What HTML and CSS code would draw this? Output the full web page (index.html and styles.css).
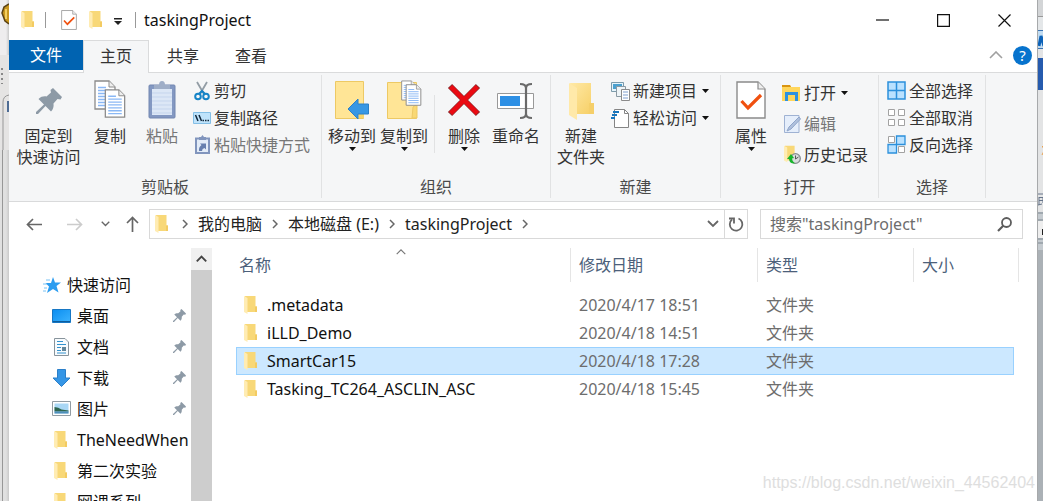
FILE: index.html
```html
<!DOCTYPE html>
<html lang="zh-CN">
<head>
<meta charset="utf-8">
<title>taskingProject</title>
<link rel="stylesheet" href="styles.css">
</head>
<body>
<svg class="defs" aria-hidden="true">
  <defs>
    <linearGradient id="gold" x1="0" x2="1" y1="0" y2="1"><stop offset="0" stop-color="#ffe9a6"/><stop offset="1" stop-color="#f6ce63"/></linearGradient>
    <linearGradient id="sky" x1="0" x2="1" y1="0" y2="1"><stop offset="0" stop-color="#0a8df0"/><stop offset="1" stop-color="#3db4ff"/></linearGradient>
  </defs>
  <symbol id="folder" viewBox="0 0 13 18">
    <path d="M1 0h10.500v10.500H13V16H3z" fill="#f8d878"/>
    <path d="M11 10.500h2V16h-2z" fill="#f3cb62"/>
    <path d="M0 0l3.500 2V18L0 16z" fill="#ffecb3"/>
  </symbol>
  <symbol id="pin" viewBox="0 0 26 26">
    <path d="M17 0l9 9-1.500 2.500-3-.5-4 4.500c.5 3.500-.5 6-2.500 8L9.500 18 2 26H0v-2l8-7.500L2.500 11C5 8.500 8 8 10.500 8.500L15 4.500 14.500 2z" fill="#8d9aa6"/>
  </symbol>
  <symbol id="page" viewBox="0 0 22 30">
    <path d="M1 1h14l6 6v22H1z" fill="#fff" stroke="#8b8b8b" stroke-width="1.300"/>
    <path d="M15 1v6h6" fill="#eee" stroke="#8b8b8b"/>
    <path d="M4 7.500h8M4 10.500h14M4 13.500h14M4 16.500h14M4 19.500h14M4 22.500h14M4 25.500h14" stroke="#8ab8f5" stroke-width="1.300"/>
  </symbol>
  <symbol id="check" viewBox="0 0 30 38">
    <path d="M1 1h21l7 7v29H1z" fill="#fff" stroke="#8b8b8b" stroke-width="1.400"/>
    <path d="M22 1v7h7" fill="#eee" stroke="#8b8b8b" stroke-width="1.200"/>
    <path d="M5.500 20l6.500 7L25 14" fill="none" stroke="#f0500f" stroke-width="3.200"/>
  </symbol>
  <symbol id="chev-r" viewBox="0 0 6 10"><path d="M1 1l4 4-4 4" fill="none" stroke="#666" stroke-width="1.500"/></symbol>
  <symbol id="chev-d" viewBox="0 0 12 8"><path d="M1 1l5 5 5-5" fill="none" stroke="#666" stroke-width="1.800"/></symbol>
  <symbol id="chev-u" viewBox="0 0 14 8"><path d="M1 7l6-6 6 6" fill="none" stroke="currentColor" stroke-width="1.600"/></symbol>
  <symbol id="caret" viewBox="0 0 7 4"><path d="M0 0h7L3.500 4z" fill="#111"/></symbol>
</svg>

<div class="desktop">
  <div class="behind-left" aria-hidden="true">
    <svg width="9" height="150" viewBox="0 0 9 150"><path d="M9 4L4 7 2 13l3 8 4 3" fill="#c8961e" stroke="#5a4213" stroke-width="1.500"/><path d="M6 9v10" stroke="#f3cf60" stroke-width="2"/><path d="M0 55h9v95H0z" fill="#e5e4e3"/><path d="M2 68v2m0 3v2m0 3v2m0 3v1" stroke="#888" stroke-width="2"/><path d="M9 95Q3 96 3 102v48" fill="none" stroke="#979797"/><path d="M7 101h2v11H7z" fill="#4e6c94"/></svg>
  </div>

  <main class="window">
    <header class="titlebar">
      <svg class="t-folder" width="13" height="18"><use href="#folder"/></svg>
      <i class="t-sep"></i>
      <button class="plain t-check" aria-label="属性"><svg width="16" height="20"><use href="#check"/></svg></button>
      <button class="plain t-new" aria-label="新建文件夹"><svg width="13" height="18"><use href="#folder"/></svg></button>
      <button class="plain t-drop" aria-label="自定义快速访问工具栏"><svg width="8" height="8"><path d="M0 0h8v1.500H0zM0 3h8L4 7z" fill="#222"/></svg></button>
      <i class="t-sep"></i>
      <h1 class="title">taskingProject</h1>
      <div class="controls">
        <button class="plain" aria-label="最小化"><svg width="13" height="13"><path d="M0 6h13" stroke="#111" stroke-width="1.200"/></svg></button>
        <button class="plain" aria-label="最大化"><svg width="13" height="13"><path d="M.6.600h11.800v11.800H.6z" fill="none" stroke="#111" stroke-width="1.200"/></svg></button>
        <button class="plain" aria-label="关闭"><svg width="13" height="13"><path d="M.5.500l12 12m0-12l-12 12" stroke="#111" stroke-width="1.200"/></svg></button>
      </div>
    </header>

    <nav class="tabs">
      <button class="tab file">文件</button>
      <button class="tab active">主页</button>
      <button class="tab">共享</button>
      <button class="tab">查看</button>
      <div class="tab-tools">
        <button class="plain fold" aria-label="最小化功能区"><svg width="14" height="8"><use href="#chev-u"/></svg></button>
        <button class="help" aria-label="帮助">?</button>
      </div>
    </nav>

    <section class="ribbon">
      <div class="group g-clip">
        <div class="tools">
          <button class="big wide"><svg class="pin-big" width="26" height="26"><use href="#pin"/></svg><span>固定到<br>快速访问</span></button>
          <button class="big"><svg width="32" height="38"><use href="#page" width="22" height="30"/><use href="#page" x="10" y="9" width="22" height="29"/></svg><span>复制</span></button>
          <button class="big" disabled><svg width="28" height="40"><rect x="1" y="5" width="26" height="33" rx="1" fill="#8398c2" stroke="#7387b1"/><path d="M4 9h20v26H4z" fill="#dce7f6"/><path d="M4 13h20M4 17h20M4 21h20M4 25h20M4 29h20M4 33h20" stroke="#c5d5ed"/><path d="M6 9V5h5q0-4 3-4t3 4h5v4z" fill="#9faec7"/></svg><span>粘贴</span></button>
          <div class="smalls">
            <button class="small"><svg width="18" height="20"><path d="M4 1l7 12M14 1L7 13" stroke="#939da5" stroke-width="1.800"/><circle cx="5" cy="15.500" r="2.800" fill="none" stroke="#1684c7" stroke-width="2"/><circle cx="13" cy="15.500" r="2.800" fill="none" stroke="#1684c7" stroke-width="2"/><path d="M6 13l3-3 3 3" fill="none" stroke="#1684c7" stroke-width="2"/></svg>剪切</button>
            <button class="small"><svg width="18" height="12"><path d="M.5.500h17v11H.5z" fill="#bfe3fb" stroke="#84bfe6"/><path d="M2.500 3l2.500 6M6 3l2.500 6" stroke="#12283c" stroke-width="1.500"/><path d="M9.500 8.500h1.500m1 0h1.500m1 0H16" stroke="#12283c" stroke-width="1.500"/></svg>复制路径</button>
            <button class="small" disabled><svg width="18" height="20"><path d="M3 3.500h13v14.500H3z" fill="#e3ecf8" stroke="#8195bd" stroke-width="2"/><path d="M6 5V2h2l1.500-2L11 2h2v3z" fill="#8195bd"/><path d="M6 16q-.5-4 2.500-6L7 8.500h6v6L11.500 13Q9 13.500 9 16z" fill="#677fae"/></svg>粘贴快捷方式</button>
          </div>
        </div>
        <h2>剪贴板</h2>
      </div>

      <div class="group g-org">
        <div class="tools">
          <button class="big"><svg width="34" height="40"><path d="M.5 1.500h28v37H.5z" fill="#ffe596" stroke="#edc964"/><path d="M25 25h4v13h-5V28z" fill="#f8d469"/><path d="M13 29l10-10v5h10.500v10H23v5z" fill="#3797e4" stroke="#2c80c8"/></svg><span>移动到</span><svg width="7" height="4"><use href="#caret"/></svg></button>
          <button class="big"><svg width="35" height="40"><path d="M.5 2.500h29v36H.5z" fill="#ffe596" stroke="#edc964"/><path d="M26 27l4-3v14h-5z" fill="#f9d874" stroke="#edc964"/><use href="#page" x="14" y="0" width="15" height="21"/><use href="#page" x="18" y="4" width="17" height="22"/></svg><span>复制到</span><svg width="7" height="4"><use href="#caret"/></svg></button>
          <i class="divider"></i>
          <button class="big"><svg width="34" height="40"><path d="M3 6l28 28M31 6L3 34" stroke="#8e2a2e" stroke-width="6"/><path d="M3.700 6.700l26.600 26.600m0-26.600L3.700 33.300" stroke="#ea0a12" stroke-width="4.600"/></svg><span>删除</span><svg width="7" height="4"><use href="#caret"/></svg></button>
          <button class="big"><svg width="38" height="40"><path d="M.5 13.500h36v15H.5z" fill="#fff" stroke="#999"/><path d="M3 16h20v10H3z" fill="#2e90e5"/><path d="M23 4q6 0 6 4v26q0 4-6 4M35 4q-6 0-6 4v26q0 4 6 4" fill="none" stroke="#6a6a6a" stroke-width="2.200"/></svg><span>重命名</span></button>
        </div>
        <h2>组织</h2>
      </div>

      <div class="group g-new">
        <div class="tools">
          <button class="big"><svg width="25" height="40" viewBox="0 0 25 40"><path d="M1 3h21v20h3v11H6z" fill="url(#gold)"/><path d="M20 23h5v11h-5z" fill="#f5cf6a"/><path d="M0 3l8 5v32l-8-5z" fill="#ffe9a9"/></svg><span>新建<br>文件夹</span></button>
          <div class="smalls">
            <button class="small"><svg width="19" height="20"><path d="M.5 1.500h12v9H.5z" fill="#e6f4fb" stroke="#7c9bab"/><path d="M2 3h9v5H2z" fill="#4ba0cf"/><path d="M5.500 5.500h9v10h-9z" fill="#eef4f7" stroke="#8b9aa3"/><path d="M10.500 8.500h8v11h-8z" fill="#fff" stroke="#8b8b8b"/><path d="M12 11h5m-5 3h5m-5 3h5" stroke="#7f9fce"/></svg><span>新建项目</span><svg width="7" height="4"><use href="#caret"/></svg></button>
            <button class="small"><svg width="19" height="20"><path d="M3.500 1.500h10l4 4v14h-14z" fill="#fff" stroke="#858585"/><path d="M13.500 1.500v4h4" fill="none" stroke="#858585"/><path d="M2 4h6M1 7h5M0 10h4" stroke="#1976bd" stroke-width="2"/></svg><span>轻松访问</span><svg width="7" height="4"><use href="#caret"/></svg></button>
          </div>
        </div>
        <h2>新建</h2>
      </div>

      <div class="group g-open">
        <div class="tools">
          <button class="big"><svg width="30" height="38"><use href="#check"/></svg><span>属性</span><svg width="7" height="4"><use href="#caret"/></svg></button>
          <div class="smalls roomy">
            <button class="small"><svg width="19" height="18"><path d="M0 1h8l1 2h9v14H0z" fill="#ffd65b"/><path d="M0 1h8l1 2H0z" fill="#d99411"/><path d="M3 17V8h13v9h-3v-6H6v6z" fill="#2d91df"/></svg><span>打开</span><svg width="7" height="4"><use href="#caret"/></svg></button>
            <button class="small" disabled><svg width="19" height="20"><path d="M2.500 1.500H17v17H2.500z" fill="#e5eefb" stroke="#9fb2d3"/><path d="M17 3L7 13l-2 4 4-2L18.500 5z" fill="#afc0dc" stroke="#8fa5ca"/></svg>编辑</button>
            <button class="small"><svg width="19" height="20"><use href="#folder" x="2" width="12" height="18"/><circle cx="13.500" cy="13.500" r="4.800" fill="#d9ddde" stroke="#858b8e" stroke-width="1.300"/><path d="M13.500 10.500v3.500l3-2" fill="none" stroke="#555"/><path d="M5 14l4-5 3 4-2 .5q0 3 3 5Q7.500 19 7 14z" fill="#18b52c"/></svg>历史记录</button>
          </div>
        </div>
        <h2>打开</h2>
      </div>

      <div class="group g-select">
        <div class="tools">
          <div class="smalls">
            <button class="small"><svg width="19" height="19"><path d="M1 1h17v17H1zM9.500 1v17M1 9.500h17" fill="#b9e1ff" stroke="#2b90dc" stroke-width="1.500"/></svg>全部选择</button>
            <button class="small"><svg width="19" height="19"><path d="M1.500 1.500h6v6h-6zM11.500 1.500h6v6h-6zM1.500 11.500h6v6h-6zM11.500 11.500h6v6h-6z" fill="#fff" stroke="#a2a2a2"/></svg>全部取消</button>
            <button class="small"><svg width="19" height="19"><path d="M1.500 1.500h6v6h-6zM11.500 11.500h6v6h-6z" fill="#fff" stroke="#a2a2a2"/><path d="M9.500 1H18v8.500H9.500zM1 9.500h8.500V18H1z" fill="#b9e1ff" stroke="#2b90dc" stroke-width="1.300"/></svg>反向选择</button>
          </div>
        </div>
        <h2>选择</h2>
      </div>
    </section>

    <div class="navbar">
      <div class="history">
        <button class="plain" aria-label="后退"><svg width="16" height="13"><path d="M16 6.500H1M7 1L1.500 6.500 7 12" fill="none" stroke="#666" stroke-width="1.700"/></svg></button>
        <button class="plain" aria-label="前进" disabled><svg width="16" height="13"><path d="M0 6.500h15M9 1l5.500 5.500L9 12" fill="none" stroke="#ccc" stroke-width="1.700"/></svg></button>
        <button class="plain narrow" aria-label="最近浏览的位置"><svg width="9" height="6"><use href="#chev-d"/></svg></button>
        <button class="plain narrow" aria-label="上移"><svg width="13" height="16"><path d="M6.500 16V1M1 7l5.500-5.500L12 7" fill="none" stroke="#666" stroke-width="1.700"/></svg></button>
      </div>
      <div class="address">
        <svg width="13" height="18"><use href="#folder"/></svg>
        <svg class="sep" width="6" height="10"><use href="#chev-r"/></svg>
        <a href="#pc">我的电脑</a>
        <svg class="sep" width="6" height="10"><use href="#chev-r"/></svg>
        <a href="#e">本地磁盘 (E:)</a>
        <svg class="sep" width="6" height="10"><use href="#chev-r"/></svg>
        <a href="#tp">taskingProject</a>
        <svg class="sep" width="6" height="10"><use href="#chev-r"/></svg>
        <button class="plain addr-drop" aria-label="以前的位置"><svg width="12" height="8"><use href="#chev-d"/></svg></button>
        <button class="plain refresh" aria-label="刷新"><svg width="16" height="17"><path d="M10.500 2.500A6.300 6.300 0 1 1 4 3.500" fill="none" stroke="#666" stroke-width="1.800"/><path d="M1 2.500h5v5" fill="none" stroke="#666" stroke-width="1.800"/></svg></button>
      </div>
      <label class="search">
        <input type="text" aria-label="搜索" placeholder='搜索"taskingProject"'>
        <svg width="15" height="15"><circle cx="9.500" cy="5.500" r="4.500" fill="none" stroke="#5c5c5c" stroke-width="1.800"/><path d="M6.500 8.500L1 14" stroke="#5c5c5c" stroke-width="2.200"/></svg>
      </label>
    </div>

    <div class="content">
      <aside class="sidebar">
        <a class="root" href="#quick"><svg width="18" height="16"><path d="M10 0l2 5.500h6L13.500 9l2 6.500L10 12l-6 4 2-6.500L2.500 6H8z" fill="#2c9df0"/><path d="M3 3h4M0 7h4M1 11h3M0 14h3" stroke="#79c2f4"/></svg>快速访问</a>
        <a href="#desktop"><svg width="19" height="14"><path d="M.5.500h18v13H.5z" fill="url(#sky)" stroke="#1777c4"/><path d="M1 12.500h17" stroke="#0e5d9c"/></svg><span>桌面</span><svg class="pinned" width="13" height="13"><use href="#pin"/></svg></a>
        <a href="#docs"><svg width="19" height="18"><path d="M2.500.500H13l3.500 3.500v13.500h-14z" fill="#f8fbfd" stroke="#88949c"/><path d="M5 3.500h6M5 6.500h9M5 9.500h4M5 12.500h4M5 15h9" stroke="#3292ce"/><path d="M10 9h4v4h-4z" fill="#628599"/></svg><span>文档</span><svg class="pinned" width="13" height="13"><use href="#pin"/></svg></a>
        <a href="#downloads"><svg width="19" height="18"><path d="M5.500.500h8V9H18l-8.500 8.500L1 9h4.500z" fill="#3596e6" stroke="#2b7fc9"/></svg><span>下载</span><svg class="pinned" width="13" height="13"><use href="#pin"/></svg></a>
        <a href="#pictures"><svg width="19" height="15"><path d="M.5.500h18v14H.5z" fill="#fff" stroke="#929ca3"/><path d="M2.500 2.500h14v10h-14z" fill="#a9d7f5"/><path d="M2.500 6q4 0 7 2.500l7 1v1h-14z" fill="#2e654e"/><path d="M2.500 10.500h14v2h-14z" fill="#4e8fbb"/></svg><span>图片</span><svg class="pinned" width="13" height="13"><use href="#pin"/></svg></a>
        <a href="#need"><svg class="f" width="13" height="18"><use href="#folder"/></svg><span>TheNeedWhen</span></a>
        <a href="#exp2"><svg class="f" width="13" height="18"><use href="#folder"/></svg><span>第二次实验</span></a>
        <a href="#course"><svg class="f" width="13" height="18"><use href="#folder"/></svg><span>网课系列</span></a>
      </aside>
      <div class="scrollbar"><button class="plain" aria-label="向上滚动"><svg width="11" height="8" viewBox="0 0 14 8"><path d="M1 7l6-6 6 6" fill="none" stroke="#444" stroke-width="2.400"/></svg></button></div>
      <table class="files">
        <thead>
          <tr><th>名称<svg class="sort" width="10" height="6"><use href="#chev-u"/></svg></th><th>修改日期</th><th>类型</th><th>大小</th></tr>
        </thead>
        <tbody>
          <tr><td><svg width="13" height="18"><use href="#folder"/></svg>.metadata</td><td>2020/4/17 18:51</td><td>文件夹</td><td></td></tr>
          <tr><td><svg width="13" height="18"><use href="#folder"/></svg>iLLD_Demo</td><td>2020/4/18 14:51</td><td>文件夹</td><td></td></tr>
          <tr class="selected"><td><svg width="13" height="18"><use href="#folder"/></svg>SmartCar15</td><td>2020/4/18 17:28</td><td>文件夹</td><td></td></tr>
          <tr><td><svg width="13" height="18"><use href="#folder"/></svg>Tasking_TC264_ASCLIN_ASC</td><td>2020/4/18 15:45</td><td>文件夹</td><td></td></tr>
        </tbody>
      </table>
    </div>
  </main>

  <div class="behind-right" aria-hidden="true">
    <svg width="6" height="250" viewBox="0 0 6 250"><path d="M0 0h6v16H0z" fill="#d3d5d7"/><path d="M0 17h6v13H0z" fill="#e4e7e9"/><path d="M0 16.500h6" stroke="#999"/><path d="M0 30h6v19H0z" fill="#c1dcf2"/><path d="M0 30.500h6M0 48.500h6" stroke="#3b74b3"/><path d="M1 46l2-10 3 10" fill="none" stroke="#0c62b8" stroke-width="3"/><path d="M0 58h6v32H0z" fill="#265bae"/><path d="M6 145l-2 2h2m0 4l-2 4" stroke="#e8a04e" fill="none"/><path d="M0 194h6M1 197v8M1 197.500h4M1 200.500h4M5 197v6M0 205l4-1" stroke="#66758a" fill="none"/><path d="M0 212h6v38H0z" fill="#c4cacf"/><path d="M0 213h6M0 220h6M0 239h6M0 243h6" stroke="#7d8790"/><path d="M0 221h6v17H0z" fill="#eee"/><path d="M4 229h2v6H4z" fill="#222"/></svg>
  </div>
  <div class="watermark">https://blog.csdn.net/weixin_44562404</div>
</div>
</body>
</html>
```
FILE: styles.css
```css
* { box-sizing: border-box; }

body {
  margin: 0;
  font: 16px/22px "Noto Sans", "Noto Sans CJK SC", sans-serif;
  color: #111;
}

button, input { font: inherit; color: inherit; }
a { color: inherit; text-decoration: none; }
svg { display: block; flex: none; }
.defs { position: absolute; width: 0; height: 0; }

.desktop {
  position: relative;
  display: grid;
  grid-template-columns: 9px minmax(0, 1fr) 6px;
  height: 100vh;
  overflow: hidden;
}

.behind-left {
  background: linear-gradient(to right, transparent 6px, #c9c9c9), linear-gradient(to right, #e0e0e0 2px, #979797 2px, #979797 3px, #e0e0e0 3px) 0 150px no-repeat, #eeedee;
}

.behind-right { background: linear-gradient(#e3e4e5 210px, #abb1b6 250px); border-left: 1px solid #a7a9ab; overflow: hidden; }

.window {
  display: flex;
  flex-direction: column;
  min-height: 0;
  background: #fff;
}

.plain {
  display: flex;
  align-items: center;
  justify-content: center;
  padding: 0;
  border: 0;
  background: none;
}

/* Title bar */
.titlebar { display: flex; align-items: center; flex: none; height: 40px; padding: 0 2px 0 12px; }
.t-sep { width: 1px; height: 16px; background: #999; }
.t-folder { margin-right: 11px; }
.t-check { margin: 0 12px 0 15px; }
.t-drop { margin: 4px 13px 0 12px; }
.title { flex: 1; margin: 0 0 0 8px; font: inherit; color: #111; }
.controls { display: flex; }
.controls .plain { width: 61px; height: 40px; }

/* Tabs */
.tabs { display: flex; flex: none; height: 33px; border-bottom: 1px solid #dadbdc; }
.tab { width: 68px; height: 31px; padding: 0; border: 0; background: none; color: #333; }
.tab.file { width: 74px; height: 30px; background: #0063b1; color: #fff; }
.tab.active { width: 66px; height: 33px; padding-bottom: 2px; background: #f5f6f7; border: 1px solid #dadbdc; border-bottom: 0; }
.tab-tools { display: flex; align-items: center; gap: 10px; margin-left: auto; padding: 0 5px 2px 0; color: #a0a0a0; }
.help { width: 19px; height: 19px; padding: 0; border: 0; border-radius: 50%; background: #0773cd; color: #fff; font-size: 15px; line-height: 19px; }

/* Ribbon */
.ribbon { display: flex; flex: none; height: 129px; padding: 2px 0 3px; background: #f5f6f7; border-bottom: 1px solid #d9dadb; }
.group { display: flex; flex-direction: column; justify-content: space-between; border-right: 1px solid #e1e2e3; }
.group h2 { margin: 0; font: inherit; line-height: 21px; color: #4a4a4a; text-align: center; }
.g-clip { width: 313px; }
.g-org { width: 229px; }
.g-new { width: 170px; }
.g-open { width: 158px; }
.g-select { width: 107px; }
.tools { display: flex; height: 100px; padding: 5px 0 0 4px; }
.big {
  display: flex;
  flex-direction: column;
  align-items: center;
  width: 52px;
  padding: 0;
  border: 0;
  background: none;
  color: #333;
  line-height: 21px;
  white-space: nowrap;
}
.big.wide { width: 71px; }
.big > svg:first-child { height: 40px; margin-bottom: 6px; }
.big > .pin-big:first-child { height: 26px; margin: 8px 0 12px; }
.big:disabled, .small:disabled { color: #777; }
.divider { width: 1px; height: 58px; margin: 15px 3px 0 4px; background: #e1e2e3; }
.smalls { display: flex; flex-direction: column; align-items: flex-start; margin: -3px 0 0 5px; }
.small {
  display: flex;
  align-items: center;
  gap: 3px;
  height: 27px;
  padding: 0;
  border: 0;
  background: none;
  color: #333;
  white-space: nowrap;
}
.small span + svg { margin-left: 2px; }
.roomy .small { height: 31px; }
.g-new .smalls, .g-select .smalls { margin-left: 4px; }

/* Address row */
.navbar { display: flex; align-items: center; flex: none; height: 44px; padding: 0 14px 0 17px; gap: 12px; }
.history { display: flex; gap: 25px; width: 111px; }
.history .narrow + .narrow { margin-left: -9px; }
.history .narrow { margin-left: -7px; }
.address { display: flex; align-items: center; flex: 1; height: 30px; padding-left: 5px; border: 1px solid #d9d9d9; color: #222; }
.address .sep { margin: 0 10px; }
.address svg:first-child + .sep { margin-left: 14px; }
.addr-drop { width: 22px; height: 28px; margin-left: auto; }
.refresh { width: 23px; height: 28px; border-left: 1px solid #d9d9d9; }
.search { display: flex; align-items: center; width: 263px; height: 30px; padding: 0 10px 0 9px; border: 1px solid #d9d9d9; }
.search input { flex: 1; min-width: 0; padding: 0; border: 0; outline: 0; background: none; }
.search input::placeholder { color: #6d6d6d; opacity: 1; }

/* Folder view */
.content { display: flex; flex: 1; min-height: 0; padding-top: 2px; }
.sidebar { width: 182px; padding-top: 21px; overflow: hidden; flex: none; }
.sidebar a { display: flex; align-items: center; height: 31px; padding: 0 5px 0 43px; gap: 6px; white-space: nowrap; }
.sidebar a.root { padding-left: 34px; }
.sidebar .f { margin: 0 4px 0 2px; }
.pinned { margin-left: auto; }
.scrollbar { flex: none; width: 21px; background: #cdcdcd; }
.scrollbar .plain { width: 21px; height: 22px; background: #f0f0f0; }

.files { display: block; flex: 1; min-width: 0; margin: 0 18px 0 24px; border-spacing: 0; }
.files thead, .files tbody { display: block; }
.files tr { display: grid; grid-template-columns: minmax(0, 1fr) 187px 156px 105px; }
.files th {
  position: relative;
  height: 34px;
  padding: 0 8px;
  border-right: 1px solid #e5e5e5;
  font-weight: 400;
  line-height: 34px;
  text-align: left;
  color: #4c607a;
}
.files th:first-child { padding-left: 3px; }
.sort { position: absolute; top: 1px; left: 48%; color: #777; }
.files tbody { padding: 9px 5px 0 0; }
.files tbody tr { grid-template-columns: minmax(0, 1fr) 187px 156px 100px; height: 28px; }
.files td { display: flex; align-items: center; padding: 0 8px; color: #6d6d6d; white-space: nowrap; }
.files td:first-child { gap: 10px; color: #111; }
.files .selected { background: #cce8ff; outline: 1px solid #99d1ff; outline-offset: -1px; }

.watermark {
  position: absolute;
  right: 8px;
  bottom: 8px;
  font: 16px/20px "Liberation Sans", Arial, sans-serif;
  color: #dedede;
}
```
